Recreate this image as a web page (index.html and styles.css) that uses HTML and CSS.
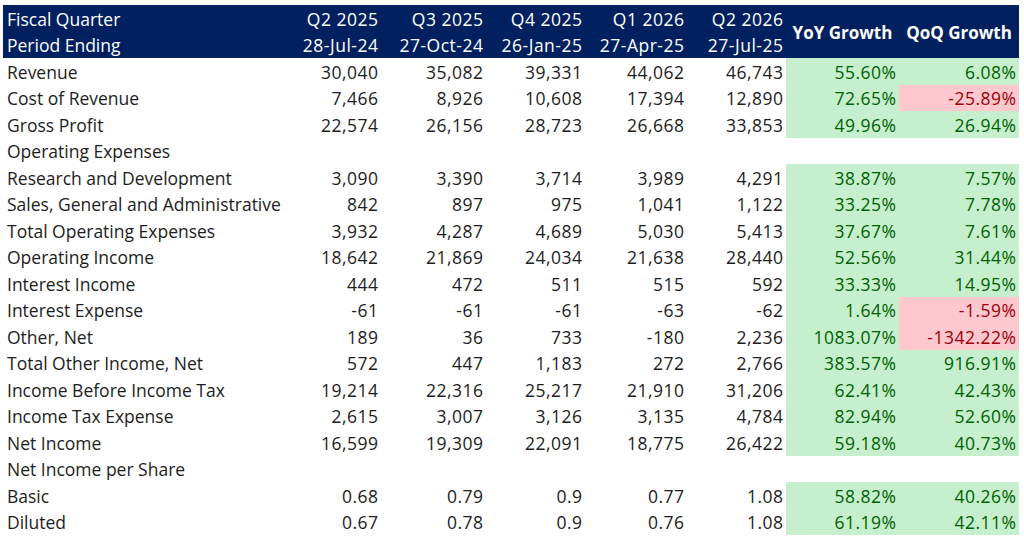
FILE: index.html
```html
<!DOCTYPE html>
<html>
<head>
<meta charset="utf-8">
<link rel="stylesheet" href="styles.css">
</head>
<body>
<div class="sheet">
  <div class="head">
    <div class="hc lbl">Fiscal Quarter</div>
    <div class="hc num">Q2 2025</div>
    <div class="hc num">Q3 2025</div>
    <div class="hc num">Q4 2025</div>
    <div class="hc num">Q1 2026</div>
    <div class="hc num">Q2 2026</div>
    <div class="hc growth">YoY Growth</div>
    <div class="hc growth">QoQ Growth</div>
    <div class="hc lbl">Period Ending</div>
    <div class="hc num">28-Jul-24</div>
    <div class="hc num">27-Oct-24</div>
    <div class="hc num">26-Jan-25</div>
    <div class="hc num">27-Apr-25</div>
    <div class="hc num">27-Jul-25</div>
  </div>
  <div class="row"><div class="lbl">Revenue</div><div class="num">30,040</div><div class="num">35,082</div><div class="num">39,331</div><div class="num">44,062</div><div class="num">46,743</div><div class="num good">55.60%</div><div class="num good">6.08%</div></div>
  <div class="row"><div class="lbl">Cost of Revenue</div><div class="num">7,466</div><div class="num">8,926</div><div class="num">10,608</div><div class="num">17,394</div><div class="num">12,890</div><div class="num good">72.65%</div><div class="num bad">-25.89%</div></div>
  <div class="row"><div class="lbl">Gross Profit</div><div class="num">22,574</div><div class="num">26,156</div><div class="num">28,723</div><div class="num">26,668</div><div class="num">33,853</div><div class="num good">49.96%</div><div class="num good">26.94%</div></div>
  <div class="row"><div class="lbl">Operating Expenses</div></div>
  <div class="row"><div class="lbl">Research and Development</div><div class="num">3,090</div><div class="num">3,390</div><div class="num">3,714</div><div class="num">3,989</div><div class="num">4,291</div><div class="num good">38.87%</div><div class="num good">7.57%</div></div>
  <div class="row"><div class="lbl">Sales, General and Administrative</div><div class="num">842</div><div class="num">897</div><div class="num">975</div><div class="num">1,041</div><div class="num">1,122</div><div class="num good">33.25%</div><div class="num good">7.78%</div></div>
  <div class="row"><div class="lbl">Total Operating Expenses</div><div class="num">3,932</div><div class="num">4,287</div><div class="num">4,689</div><div class="num">5,030</div><div class="num">5,413</div><div class="num good">37.67%</div><div class="num good">7.61%</div></div>
  <div class="row"><div class="lbl">Operating Income</div><div class="num">18,642</div><div class="num">21,869</div><div class="num">24,034</div><div class="num">21,638</div><div class="num">28,440</div><div class="num good">52.56%</div><div class="num good">31.44%</div></div>
  <div class="row"><div class="lbl">Interest Income</div><div class="num">444</div><div class="num">472</div><div class="num">511</div><div class="num">515</div><div class="num">592</div><div class="num good">33.33%</div><div class="num good">14.95%</div></div>
  <div class="row"><div class="lbl">Interest Expense</div><div class="num">-61</div><div class="num">-61</div><div class="num">-61</div><div class="num">-63</div><div class="num">-62</div><div class="num good">1.64%</div><div class="num bad">-1.59%</div></div>
  <div class="row"><div class="lbl">Other, Net</div><div class="num">189</div><div class="num">36</div><div class="num">733</div><div class="num">-180</div><div class="num">2,236</div><div class="num good">1083.07%</div><div class="num bad">-1342.22%</div></div>
  <div class="row"><div class="lbl">Total Other Income, Net</div><div class="num">572</div><div class="num">447</div><div class="num">1,183</div><div class="num">272</div><div class="num">2,766</div><div class="num good">383.57%</div><div class="num good">916.91%</div></div>
  <div class="row"><div class="lbl">Income Before Income Tax</div><div class="num">19,214</div><div class="num">22,316</div><div class="num">25,217</div><div class="num">21,910</div><div class="num">31,206</div><div class="num good">62.41%</div><div class="num good">42.43%</div></div>
  <div class="row"><div class="lbl">Income Tax Expense</div><div class="num">2,615</div><div class="num">3,007</div><div class="num">3,126</div><div class="num">3,135</div><div class="num">4,784</div><div class="num good">82.94%</div><div class="num good">52.60%</div></div>
  <div class="row"><div class="lbl">Net Income</div><div class="num">16,599</div><div class="num">19,309</div><div class="num">22,091</div><div class="num">18,775</div><div class="num">26,422</div><div class="num good">59.18%</div><div class="num good">40.73%</div></div>
  <div class="row"><div class="lbl">Net Income per Share</div></div>
  <div class="row"><div class="lbl">Basic</div><div class="num">0.68</div><div class="num">0.79</div><div class="num">0.9</div><div class="num">0.77</div><div class="num">1.08</div><div class="num good">58.82%</div><div class="num good">40.26%</div></div>
  <div class="row"><div class="lbl">Diluted</div><div class="num">0.67</div><div class="num">0.78</div><div class="num">0.9</div><div class="num">0.76</div><div class="num">1.08</div><div class="num good">61.19%</div><div class="num good">42.11%</div></div>
</div>
</body>
</html>
```
FILE: styles.css
```css
html, body {
  margin: 0;
  padding: 0;
  background: #ffffff;
}
body {
  font-family: "Open Sans", "Liberation Sans", Arial, sans-serif;
  font-size: 17.5px;
  color: #1d1d22;
}
.sheet {
  padding: 5px 0 0 3px;
  width: 1016px;
}
.head, .row {
  display: grid;
  grid-template-columns: 287px 91px 105px 99px 102px 99px 113px 120px;
  grid-auto-rows: 26.5px;
}
.head {
  background: #002060;
  color: #ffffff;
}
.head .growth {
  grid-row: 1 / span 2;
  font-weight: bold;
  font-size: 17px;
  letter-spacing: 0;
  display: flex;
  align-items: center;
  justify-content: center;
  padding: 2px 0 0 0;
}
.head .growth:nth-of-type(7) { grid-column: 7; }
.head .growth:nth-of-type(8) { grid-column: 8; }
.lbl, .num {
  display: flex;
  align-items: center;
  white-space: nowrap;
  padding-top: 1px;
}
.lbl {
  padding-left: 4px;
}
.num {
  justify-content: flex-end;
  padding-right: 2.5px;
  letter-spacing: 0.5px;
}
.good {
  background: #c6efce;
  color: #006100;
}
.bad {
  background: #ffc7ce;
  color: #9c0006;
}
```
